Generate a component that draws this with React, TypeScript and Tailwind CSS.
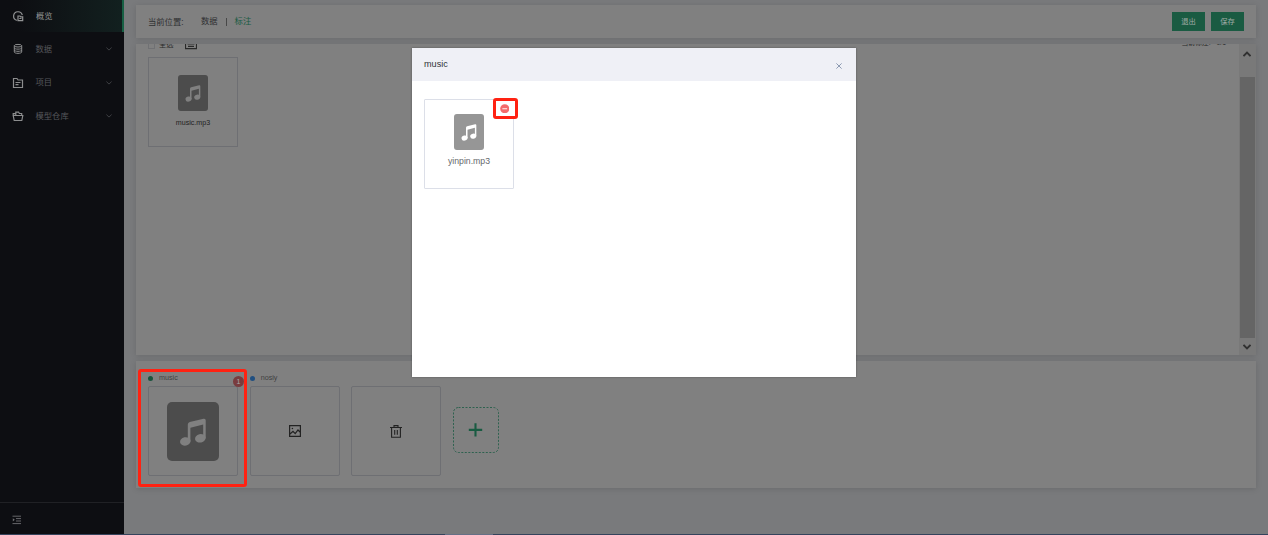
import React from "react";

const stroke = { fill: "none", stroke: "currentColor" } as const;

function Music({ className, note }: { className: string; note: string }) {
  return (
    <svg viewBox="0 0 52 59" preserveAspectRatio="none" className={className}>
      <rect width="52" height="59" rx="5" fill="currentColor" />
      <g fill={note}>
        <ellipse cx="18.3" cy="39.4" rx="5.3" ry="4.2" transform="rotate(-12 18.3 39.4)" />
        <ellipse cx="33.3" cy="36.3" rx="5.3" ry="4.2" transform="rotate(-12 33.3 36.3)" />
        <path d="M20.8 22.5Q20.8 20.4 22.8 19.9L36.6 16.7Q38.7 16.3 38.7 18.3V36.5H36.2V22.6L23.4 25.7V39.5H20.8Z" />
      </g>
    </svg>
  );
}

function Chevron() {
  return (
    <svg viewBox="0 0 6 4" className="ml-auto h-1 w-1.5 text-[#4b4d51]">
      <path d="M.4 .6L3 3.1L5.6 .6" {...stroke} strokeWidth=".8" />
    </svg>
  );
}

const menu = [
  {
    name: "数据",
    icon: (
      <g {...stroke}>
        <ellipse cx="6" cy="2.7" rx="3.7" ry="1.3" />
        <path d="M2.3 2.7V9C2.3 10.8 9.7 10.8 9.7 9V2.7M2.3 4.8C2.3 6.6 9.7 6.6 9.7 4.8M2.3 7C2.3 8.8 9.7 8.8 9.7 7" />
      </g>
    ),
  },
  {
    name: "项目",
    icon: <path d="M1.5 10.5V1.5H5L6 3H10.5V10.5ZM3.5 5.5H8.5M3.5 7.7H6.5" {...stroke} strokeWidth="1.2" />,
  },
  {
    name: "模型仓库",
    icon: (
      <g {...stroke} strokeWidth="1.2">
        <path d="M2.2 10.5L1.2 5.5H10.8L9.8 10.5Z" />
        <path d="M1.2 5V3.6H3.2M3.8 5V2.2H6.6L7.4 3.5H9.7V5" />
      </g>
    ),
  },
];

function Sidebar() {
  return (
    <aside className="flex w-[124px] shrink-0 flex-col bg-[#0d0e12] text-[#55575b]">
      <div className="flex h-8 items-center border-r-2 border-[#176044] bg-gradient-to-r from-[#0d0e12] from-15% to-[#12201f] pl-3 text-[#929394]">
        <svg viewBox="0 0 12 12" className="mr-3 size-3">
          <path d="M4.8 10.4A4.4 4.4 0 1 1 10.3 5.2" {...stroke} strokeWidth="1.2" />
          <path d="M6 10.7V6H8L8.7 6.8H10.7V10.7ZM7.3 8.5H9.5" {...stroke} strokeWidth="1.2" />
        </svg>
        概览
      </div>
      {menu.map((m) => (
        <div key={m.name} className="flex h-[33.4px] items-center pt-px pr-3 pl-3">
          <svg viewBox="0 0 12 12" className="mr-[11.5px] size-3 text-[#8c8d8e]">{m.icon}</svg>
          {m.name}
          <Chevron />
        </div>
      ))}
      <div className="mt-auto flex h-8 items-center border-t border-[#202125] pt-[3px] pl-3 text-[#707174]">
        <svg viewBox="0 0 10 10" className="size-2.5">
          <path d="M.5 1.2H9M4 3.6H9M4 6H9M.5 8.6H9" {...stroke} strokeWidth=".9" />
          <path d="M.8 3.2L2.8 4.8L.8 6.4Z" fill="currentColor" />
        </svg>
      </div>
    </aside>
  );
}

function Scrollbar() {
  return (
    <div className="flex w-[17px] shrink-0 flex-col items-center bg-[#797979] pr-px text-[#303030]">
      <div className="flex h-[33px] pt-[7px]">
        <svg viewBox="0 0 8 6" className="h-1.5 w-2"><path d="M.5 5.2L4 1.7L7.5 5.2" {...stroke} strokeWidth="1.9" /></svg>
      </div>
      <div className="w-[15px] flex-1 bg-[#656565]" />
      <div className="flex h-[17px] pt-1.5">
        <svg viewBox="0 0 8 6" className="h-1.5 w-2"><path d="M.5 .8L4 4.3L7.5 .8" {...stroke} strokeWidth="1.9" /></svg>
      </div>
    </div>
  );
}

function Category({ name, dot, children }: { name: string; dot: string; children: React.ReactNode }) {
  return (
    <div className="mr-[11.7px] w-[90px]">
      <div className="flex h-[18px] items-center text-[7.2px] text-[#404142]">
        {name && <i className={`mr-1.5 size-[5px] rounded-full ${dot}`} />}
        {name}
      </div>
      <div className="mt-[-1px] flex h-[90px] items-center justify-center rounded-[2px] border border-[#6e6f73] text-[#222]">
        {children}
      </div>
    </div>
  );
}

function Annotation() {
  return (
    <section className="relative flex h-[127px] bg-[#808080] pt-2 pl-3 shadow-[0_1px_6px_rgba(0,0,0,0.13)]">
      <Category name="music" dot="bg-[#19543d]">
        <Music className="h-[59px] w-[52px] text-[#4c4c4c]" note="#808080" />
      </Category>
      <Category name="nosiy" dot="bg-[#204f80]">
        <svg viewBox="0 0 12 12" className="size-3">
          <path d="M.6 .6H11.4V11.4H.6ZM1 9L4 6.4L6.2 8.7L9 5L11 7" {...stroke} strokeWidth="1.2" />
          <circle cx="3.4" cy="3.5" r=".8" fill="currentColor" />
        </svg>
      </Category>
      <Category name="" dot="">
        <svg viewBox="0 0 12 13" className="h-[13px] w-3">
          <path d="M0 2.5H12M4 2.4V.6H8V2.4M1.6 2.8V12.3H10.4V2.8M4.7 5V9.8M7.3 5V9.8" {...stroke} strokeWidth="1.1" />
        </svg>
      </Category>
      <button className="mt-[38px] flex size-[46px] items-center justify-center text-[#195b42]">
        <svg viewBox="0 0 46 46" className="size-[46px]">
          <rect x=".5" y=".5" width="45" height="45" rx="5" {...stroke} strokeWidth=".8" strokeDasharray="2 1.5" />
          <path d="M22.5 16.2V29.6M15.8 22.9H29.2" {...stroke} strokeWidth="2.1" />
        </svg>
      </button>
      <span className="absolute top-[14.5px] left-[97px] flex size-[11px] items-center justify-center rounded-full bg-[#793c3e] text-[7px] leading-none text-[#aaa]">1</span>
      <div className="absolute top-2 left-[1.5px] h-[118px] w-[109.5px] rounded-[3px] border-[3px] border-[#ff2212]" />
    </section>
  );
}

function Dialog() {
  return (
    <div className="absolute top-12 left-[412px] h-[328.5px] w-[444px] bg-white shadow-[0_0_2px_rgba(0,0,0,0.35)]">
      <header className="flex h-[33px] items-center justify-between bg-[#eff0f6] pr-[14px] pl-3 text-[9.1px] text-[#303338]">
        music
        <svg viewBox="0 0 6 6" className="mt-0.5 size-1.5 text-[#8190aa]">
          <path d="M.4 .4L5.6 5.6M5.6 .4L.4 5.6" {...stroke} strokeWidth=".9" />
        </svg>
      </header>
      <div className="mt-[18px] ml-3 flex h-[90px] w-[90px] flex-col items-center rounded-[1px] border border-[#dcdfe8] pt-[14px] text-[8.7px] text-[#66686c]">
        <Music className="h-9 w-[30px] text-[#969696]" note="#ffffff" />
        <span className="mt-[6px] leading-[11px]">yinpin.mp3</span>
      </div>
      <div className="absolute top-[50px] left-[80.5px] flex h-[21px] w-[25.5px] items-center justify-center rounded-[3px] border-[3px] border-[#ff2212] bg-white pr-0.5">
        <svg viewBox="0 0 10 10" className="size-[9.5px]">
          <circle cx="5" cy="5" r="4.8" fill="#f46c6c" />
          <path d="M2.5 5H7.5" stroke="#fff" strokeWidth="1" />
        </svg>
      </div>
    </div>
  );
}

export default function App() {
  return (
    <div className="relative flex h-[535px] w-[1268px] flex-col overflow-hidden bg-[#797a7c] font-['Liberation_Sans','Noto_Sans_CJK_SC',sans-serif] text-[8.3px]">
      <div className="flex min-h-0 flex-1">
        <Sidebar />
        <main className="flex flex-1 flex-col gap-1.5 pt-[5px] pr-3 pl-3">
          <header className="flex h-[33px] items-center bg-[#808080] pr-3 pl-3 text-[#2e2f31] shadow-[0_1px_6px_rgba(0,0,0,0.13)]">
            <span className="w-[53px] pt-px">当前位置:</span>
            <span>数据</span>
            <span className="mx-2 h-2 w-px bg-[#484848]" />
            <span className="text-[#195b42]">标注</span>
            <div className="ml-auto flex gap-1.5 text-[7.3px] text-[#a0aba6]">
              <button className="h-[19px] w-[33px] bg-[#1a5b42] pt-0.5">退出</button>
              <button className="h-[19px] w-[33px] bg-[#1a5b42] pt-0.5">保存</button>
            </div>
          </header>
          <section className="flex h-[311px] overflow-hidden bg-[#808080] shadow-[0_1px_6px_rgba(0,0,0,0.13)]">
            <div className="min-w-0 flex-1 pl-3">
              <div className="mt-[-5px] flex h-3 items-center pr-[13px] text-[7.2px] text-[#292929]">
                <span className="mr-1 size-[7px] border border-[#707174]" />
                全选
                <svg viewBox="0 0 12 10" className="ml-3 h-2.5 w-3">
                  <path d="M.5 .5H11.5V8.7H.5ZM3 6.3H9M2.5 4H9.5" {...stroke} strokeWidth="1.2" />
                </svg>
                <span className="mt-[-3px] ml-auto flex gap-1.5 text-[6.8px]"><span>当前标注:</span><span>0/1</span></span>
              </div>
              <div className="mt-[6px] flex size-[90px] flex-col items-center border border-[#6e6f73] pt-[17px] text-[7.1px] text-[#222]">
                <Music className="h-9 w-[30px] text-[#4c4c4c]" note="#808080" />
                <span className="mt-[7px] leading-[10px]">music.mp3</span>
              </div>
            </div>
            <Scrollbar />
          </section>
          <Annotation />
        </main>
      </div>
      <div className="h-px shrink-0 bg-[#35435c]">
        <div className="ml-[445px] h-px w-12 bg-[#657086]" />
      </div>
      <Dialog />
    </div>
  );
}
